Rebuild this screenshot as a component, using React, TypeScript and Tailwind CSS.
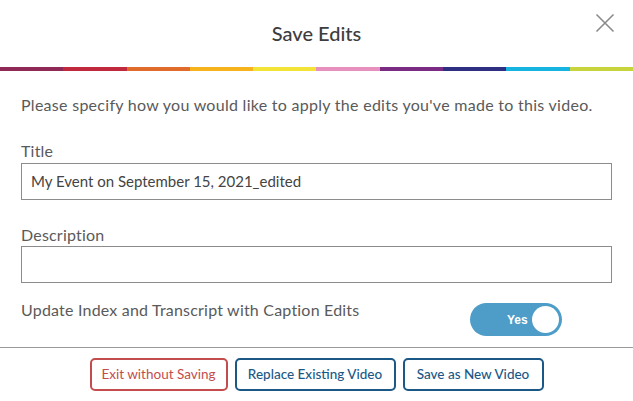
import React from "react";

const colors = ["#8e2a55", "#c0283b", "#e06b2b", "#f6b31c", "#f3e336", "#e890bd", "#7a2c85", "#2e2f80", "#15b4e1", "#c7d43b"];

export default function App() {
  return (
    <div className="w-[633px] h-[401px] bg-white overflow-hidden text-[#5a5a5a]" style={{ fontFamily: "Lato, 'Open Sans', sans-serif" }}>
      <div className="relative h-[67px] flex items-center justify-center">
        <h1 className="text-[20px] text-[#3d3d3d] font-medium leading-none pb-[2px]">Save Edits</h1>
        <button className="absolute right-[18px] top-[13px] w-[20px] h-[20px]">
          <svg width="20" height="20" viewBox="0 0 20 20" fill="none" stroke="#8a8a8a" strokeWidth="1.6">
            <path d="M1.5 1.5 L18.5 18.5 M18.5 1.5 L1.5 18.5" />
          </svg>
        </button>
      </div>
      <div className="flex h-[4px]">
        {colors.map((c) => (
          <div key={c} className="flex-1" style={{ backgroundColor: c }} />
        ))}
      </div>
      <div className="px-[21px] pt-[24px]">
        <p className="text-[16px] leading-[20px] tracking-[0.28px]">Please specify how you would like to apply the edits you've made to this video.</p>
        <div className="text-[16px] leading-[20px] mt-[26px] tracking-[0.2px]">Title</div>
        <div className="mt-[2px] h-[37px] border border-[#8c8c8c] flex items-center px-[9px] text-[15px] text-[#444]">
          My Event on September 15, 2021_edited
        </div>
        <div className="text-[16px] leading-[20px] mt-[25px] tracking-[0.2px]">Description</div>
        <div className="mt-[1px] h-[37px] border border-[#8c8c8c]" />
        <div className="flex items-start justify-between mt-[20px] h-[33px]">
          <span className="text-[16px] leading-[20px] mt-[-3px] tracking-[0.2px]">Update Index and Transcript with Caption Edits</span>
          <div className="mr-[50px] w-[92px] h-[33px] rounded-full bg-[#4e9cc8] flex items-center justify-end pr-[3px] relative">
            <span className="absolute left-[37px] text-white text-[12px] font-bold" style={{ fontFamily: "Arial, 'Liberation Sans', sans-serif" }}>Yes</span>
            <div className="w-[27px] h-[27px] rounded-full bg-white" />
          </div>
        </div>
      </div>
      <div className="mt-[11px] border-t border-[#9a9a9a]" />
      <div className="flex justify-center gap-[7px] pt-[10px]">
        <button className="h-[33px] w-[138px] whitespace-nowrap rounded-[5px] border-2 border-[#c34d4d] text-[#c34d4d] text-[13.5px]">Exit without Saving</button>
        <button className="h-[33px] w-[161px] whitespace-nowrap rounded-[5px] border-2 border-[#1b5886] text-[#1b5886] text-[13.5px] font-medium">Replace Existing Video</button>
        <button className="h-[33px] w-[141px] whitespace-nowrap rounded-[5px] border-2 border-[#1b5886] text-[#1b5886] text-[13.5px] font-medium">Save as New Video</button>
      </div>
    </div>
  );
}
